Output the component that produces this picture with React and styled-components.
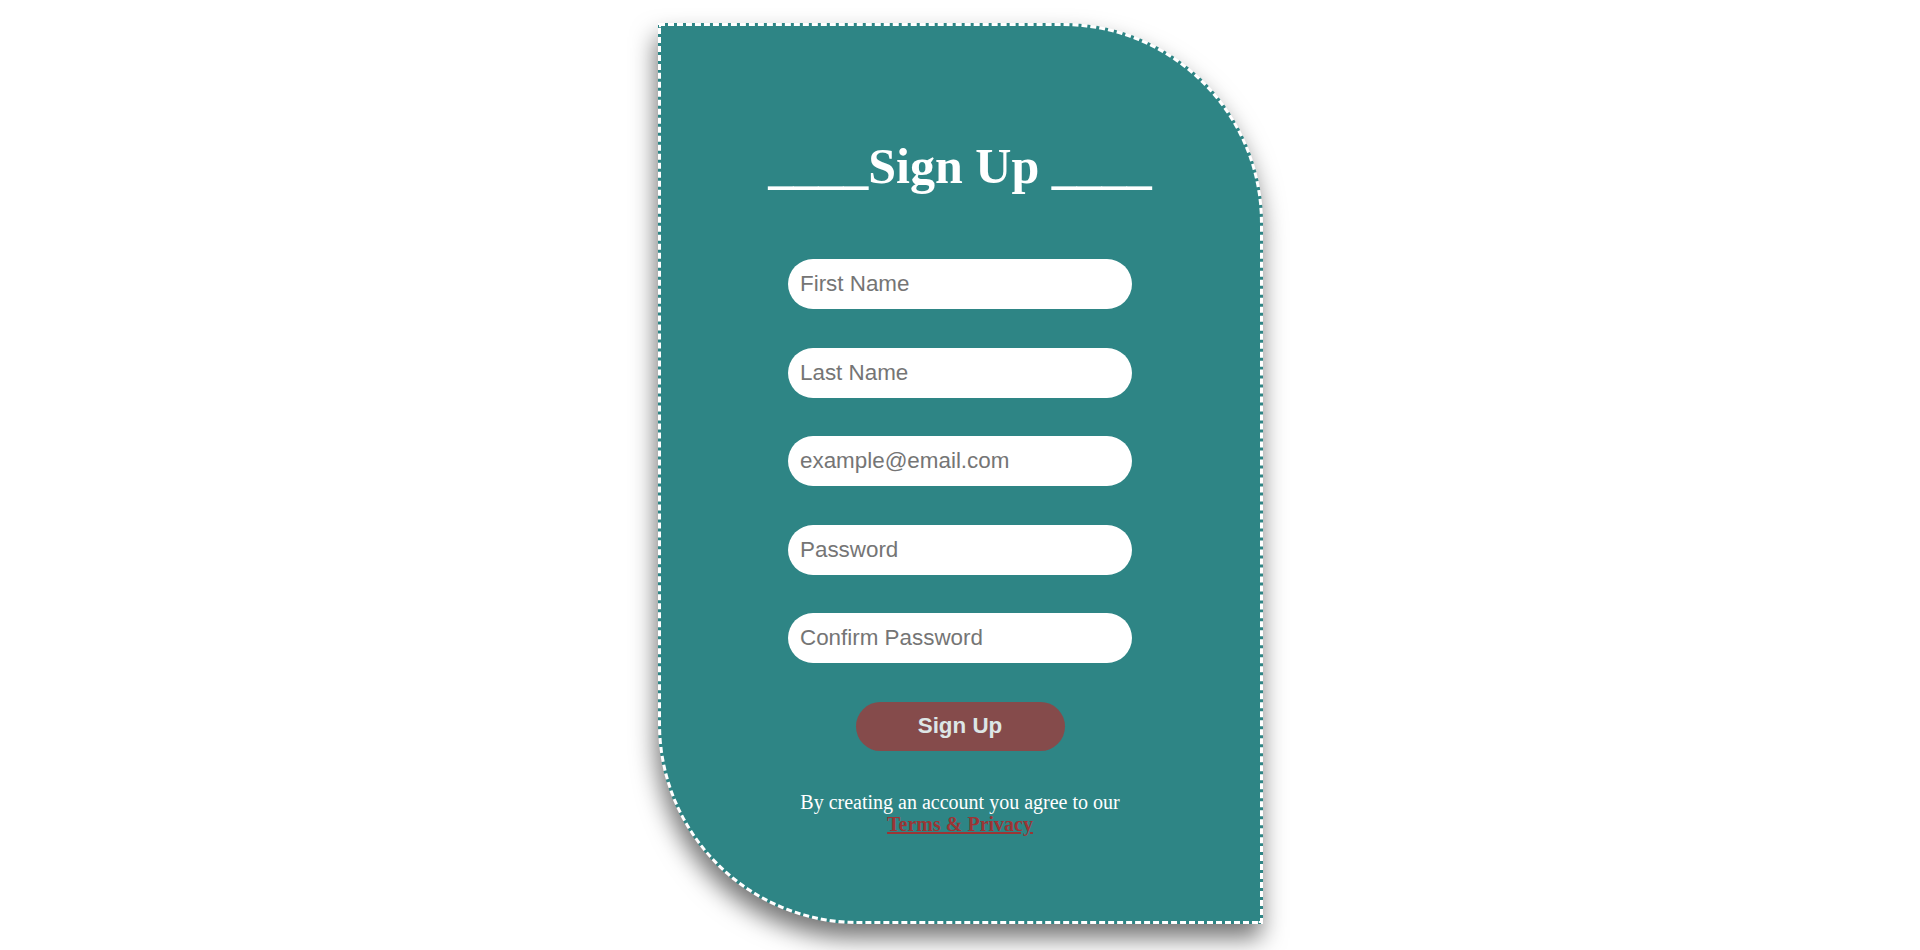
import React from "react";
import styled, { createGlobalStyle } from "styled-components";

const GlobalStyle = createGlobalStyle`
  html, body {
    margin: 0;
    background: #ffffff;
    font-family: "Liberation Serif", "Times New Roman", serif;
  }
`;

const Page = styled.div`
  display: flex;
  justify-content: center;
  min-height: 950px;
  box-sizing: border-box;
  padding: 23px 0 26px;
`;

const Card = styled.div`
  box-sizing: border-box;
  width: 605px;
  height: 901px;
  background-color: #2e8585;
  border: 3px dashed #ffffff;
  border-radius: 0 200px 0 200px;
  box-shadow: -2px 14px 24px rgba(0, 0, 0, 0.55);
  display: flex;
  flex-direction: column;
  align-items: center;
  padding-top: 113px;
`;

const Title = styled.h1`
  margin: 0;
  font-family: "Liberation Serif", "Times New Roman", serif;
  font-size: 50px;
  font-weight: bold;
  line-height: 55px;
  color: #ffffff;
  white-space: pre;
`;

const Form = styled.form`
  display: flex;
  flex-direction: column;
  align-items: center;
  gap: 38.5px;
  margin-top: 65px;
`;

const Field = styled.input`
  box-sizing: border-box;
  width: 344px;
  height: 50px;
  border: none;
  outline: none;
  border-radius: 25px;
  padding: 0 12px;
  background: #ffffff;
  font-family: "Liberation Sans", Arial, sans-serif;
  font-size: 22.4px;
  color: #333;

  &::placeholder {
    color: #757575;
  }
`;

const SubmitButton = styled.button`
  width: 209px;
  height: 49px;
  border: none;
  border-radius: 25px;
  background-color: #854b4b;
  color: #dde6e6;
  font-family: "Liberation Sans", Arial, sans-serif;
  font-size: 22.4px;
  font-weight: bold;
  cursor: pointer;
`;

const Agreement = styled.p`
  width: 344px;
  margin: 40px 0 0;
  text-align: center;
  font-family: "Liberation Serif", "Times New Roman", serif;
  font-size: 20px;
  line-height: 22.5px;
  color: #ffffff;
`;

const TermsLink = styled.a`
  color: #9b3535;
  font-weight: bold;
  text-decoration: underline;
`;

const fields = [
  { type: "text", placeholder: "First Name" },
  { type: "text", placeholder: "Last Name" },
  { type: "email", placeholder: "example@email.com" },
  { type: "password", placeholder: "Password" },
  { type: "password", placeholder: "Confirm Password" },
];

const App = () => {
  return (
    <>
      <GlobalStyle />
      <Page>
        <Card>
          <Title>{"____Sign Up ____"}</Title>
          <Form onSubmit={(e) => e.preventDefault()}>
            {fields.map((f) => (
              <Field key={f.placeholder} type={f.type} placeholder={f.placeholder} />
            ))}
            <SubmitButton type="submit">Sign Up</SubmitButton>
          </Form>
          <Agreement>
            By creating an account you agree to our{" "}
            <TermsLink href="#">Terms &amp; Privacy</TermsLink>
          </Agreement>
        </Card>
      </Page>
    </>
  );
};

export default App;
